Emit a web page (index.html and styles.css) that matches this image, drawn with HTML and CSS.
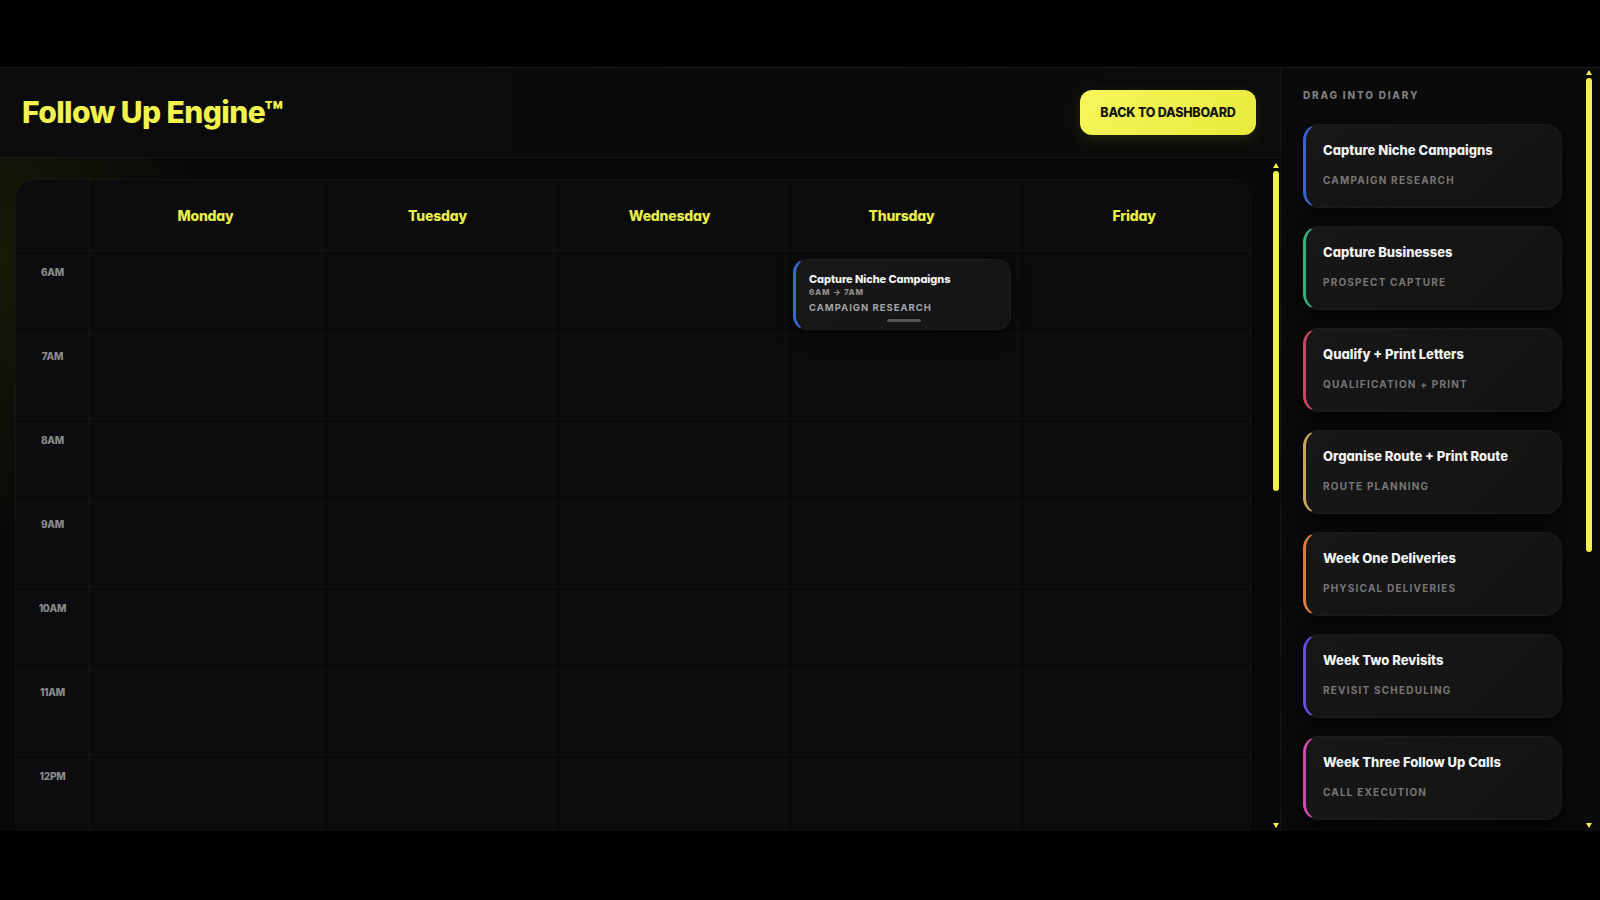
FILE: index.html
```html
<!DOCTYPE html>
<html lang="en">
<head>
    <meta charset="UTF-8">
    <meta name="viewport" content="width=device-width, initial-scale=1.0">
    <title>Follow Up Engine™ – Diary</title>
    <link rel="stylesheet" href="styles.css">
</head>
<body>
    <div class="topbar"></div>

    <div class="app">
        <main class="main">
            <header class="header">
                <h1>Follow Up Engine™</h1>
                <button type="button" class="back-btn">BACK TO DASHBOARD</button>
            </header>

            <div class="cal-area">
                <div class="cal-scroll">
                    <div class="calendar">
                        <div class="corner"></div>
                        <div class="day">Monday</div>
                        <div class="day">Tuesday</div>
                        <div class="day">Wednesday</div>
                        <div class="day">Thursday</div>
                        <div class="day">Friday</div>

                        <div class="time">6AM</div>
                        <div class="slot"></div>
                        <div class="slot"></div>
                        <div class="slot"></div>
                        <div class="slot">
                            <div class="event">
                                <div class="event-title">Capture Niche Campaigns</div>
                                <div class="event-time">6AM → 7AM</div>
                                <div class="event-cat">CAMPAIGN RESEARCH</div>
                                <div class="event-handle"></div>
                            </div>
                        </div>
                        <div class="slot"></div>

                        <div class="time">7AM</div>
                        <div class="slot"></div><div class="slot"></div><div class="slot"></div><div class="slot"></div><div class="slot"></div>

                        <div class="time">8AM</div>
                        <div class="slot"></div><div class="slot"></div><div class="slot"></div><div class="slot"></div><div class="slot"></div>

                        <div class="time">9AM</div>
                        <div class="slot"></div><div class="slot"></div><div class="slot"></div><div class="slot"></div><div class="slot"></div>

                        <div class="time">10AM</div>
                        <div class="slot"></div><div class="slot"></div><div class="slot"></div><div class="slot"></div><div class="slot"></div>

                        <div class="time">11AM</div>
                        <div class="slot"></div><div class="slot"></div><div class="slot"></div><div class="slot"></div><div class="slot"></div>

                        <div class="time">12PM</div>
                        <div class="slot"></div><div class="slot"></div><div class="slot"></div><div class="slot"></div><div class="slot"></div>
                    </div>
                </div>

                <div class="vscroll cal-bar">
                    <span class="arrow-up"></span>
                    <span class="thumb"></span>
                    <span class="arrow-down"></span>
                </div>
            </div>
        </main>

        <aside class="sidebar">
            <div class="side-list">
                <h2>DRAG INTO DIARY</h2>

                <div class="task task-blue">
                    <div class="task-title">Capture Niche Campaigns</div>
                    <div class="task-sub">CAMPAIGN RESEARCH</div>
                </div>
                <div class="task task-green">
                    <div class="task-title">Capture Businesses</div>
                    <div class="task-sub">PROSPECT CAPTURE</div>
                </div>
                <div class="task task-red">
                    <div class="task-title">Qualify + Print Letters</div>
                    <div class="task-sub">QUALIFICATION + PRINT</div>
                </div>
                <div class="task task-gold">
                    <div class="task-title">Organise Route + Print Route</div>
                    <div class="task-sub">ROUTE PLANNING</div>
                </div>
                <div class="task task-orange">
                    <div class="task-title">Week One Deliveries</div>
                    <div class="task-sub">PHYSICAL DELIVERIES</div>
                </div>
                <div class="task task-purple">
                    <div class="task-title">Week Two Revisits</div>
                    <div class="task-sub">REVISIT SCHEDULING</div>
                </div>
                <div class="task task-pink">
                    <div class="task-title">Week Three Follow Up Calls</div>
                    <div class="task-sub">CALL EXECUTION</div>
                </div>
            </div>

            <div class="vscroll side-bar">
                <span class="arrow-up"></span>
                <span class="thumb"></span>
                <span class="arrow-down"></span>
            </div>
        </aside>
    </div>
</body>
</html>
```

FILE: styles.css
```css
* {
    box-sizing: border-box;
}
body {
    margin: 0;
    height: 900px;
    overflow: hidden;
    background: #000;
    font-family: "Inter", "Noto Sans", sans-serif;
    font-feature-settings: "cv11";
    color: #f2f2f2;
}
.topbar {
    height: 67px;
    background: #000;
}
.app {
    display: flex;
    height: 764px;
    border-top: 1px solid #1b1b1b;
    background: #0a0a0a;
}

/* main column */
.main {
    width: 1281px;
    flex: none;
    display: flex;
    flex-direction: column;
    border-right: 1px solid #161616;
    background:
        radial-gradient(ellipse 200px 280px at 0 190px, rgba(150, 150, 0, 0.12), transparent),
        #080808;
}
.header {
    height: 90px;
    flex: none;
    display: flex;
    align-items: center;
    justify-content: space-between;
    padding: 0 24px 0 22px;
    border-bottom: 1px solid #181818;
    background: linear-gradient(90deg, #0c0c0c, #0a0a0a 60%, #0b0b0b);
}
.header h1 {
    margin: 0 0 2px;
    font-size: 30px;
    font-weight: 800;
    letter-spacing: -0.6px;
    color: #f1f34e;
}
.back-btn {
    width: 176px;
    height: 45px;
    border: 0;
    border-radius: 12px;
    background: linear-gradient(135deg, #f6f65c, #e9ea3c);
    color: #151515;
    font-family: inherit;
    font-size: 12.5px;
    font-weight: 800;
    letter-spacing: -0.2px;
    box-shadow: 0 4px 14px rgba(235, 235, 60, 0.12);
    cursor: pointer;
}

.cal-area {
    flex: 1;
    display: flex;
    min-height: 0;
}
.cal-scroll {
    flex: 1;
    overflow: hidden;
    padding: 21px 20px 0 15px;
}

/* drawn scrollbars */
.vscroll {
    flex: none;
    display: flex;
    flex-direction: column;
    align-items: center;
}
.cal-bar {
    width: 9px;
    padding: 5px 0 3px;
}
.side-bar {
    width: 10px;
    margin-right: 6px;
    padding: 2px 0 3px;
}
.thumb {
    width: 6px;
    margin-top: 3px;
    border-radius: 3px;
    background: #f1f24c;
}
.cal-bar .thumb {
    height: 320px;
}
.side-bar .thumb {
    height: 474px;
}
.arrow-up,
.arrow-down {
    width: 0;
    height: 0;
    border-left: 3px solid transparent;
    border-right: 3px solid transparent;
}
.arrow-up {
    border-bottom: 5px solid #f1f24c;
}
.arrow-down {
    margin-top: auto;
    border-top: 5px solid #f1f24c;
}

.calendar {
    display: grid;
    grid-template-columns: 74px repeat(5, 1fr);
    grid-template-rows: 71px;
    grid-auto-rows: 84px;
    border: 1px solid #151515;
    border-radius: 20px;
    overflow: hidden;
    background: #0b0b0b;
}
.corner,
.time {
    background: #0c0c0e;
    border-right: 1px solid #151515;
    border-bottom: 1px solid #141414;
}
.corner {
    border-radius: 18px 0 0 0;
}
.day {
    display: flex;
    align-items: center;
    justify-content: center;
    font-size: 14px;
    font-weight: 800;
    letter-spacing: -0.2px;
    color: #e9ee4a;
    border-right: 1px solid #151515;
    border-bottom: 1px solid #151515;
}
.time {
    padding-top: 16px;
    text-align: center;
    font-size: 10px;
    line-height: 11px;
    font-weight: 800;
    letter-spacing: -0.2px;
    color: #8a8a8a;
}
.slot {
    border-right: 1px solid #131313;
    border-bottom: 1px solid #121212;
}
.day:nth-child(6),
.slot:nth-child(6n) {
    border-right: 0;
}

.event {
    height: 71px;
    margin: 8px 6px 0 7px;
    padding: 12px 12px 0 13px;
    border: 1px solid #1d1d1d;
    border-left: 3px solid #3a68d6;
    border-radius: 14px;
    background: linear-gradient(135deg, #181818, #141414);
    box-shadow: 0 6px 16px rgba(0, 0, 0, 0.6);
}
.event-title {
    font-size: 11px;
    line-height: 14px;
    font-weight: 800;
    letter-spacing: -0.1px;
    color: #f2f2f2;
}
.event-time {
    margin-top: 1px;
    font-size: 8px;
    line-height: 11px;
    font-weight: 800;
    letter-spacing: 0.8px;
    color: #8d8d8d;
}
.event-cat {
    margin-top: 3px;
    font-size: 9.5px;
    line-height: 13px;
    font-weight: 700;
    letter-spacing: 1px;
    color: #a3a3a3;
}
.event-handle {
    width: 34px;
    height: 3px;
    margin: 5px auto 0;
    border-radius: 2px;
    background: #555;
}

/* sidebar */
.sidebar {
    flex: 1;
    display: flex;
    background: #0a0a0a;
}
.side-list {
    flex: 1;
    overflow: hidden;
    padding: 20px 22px 0 22px;
}
.sidebar h2 {
    margin: 0 0 22px;
    font-size: 10px;
    line-height: 14px;
    font-weight: 800;
    letter-spacing: 1.8px;
    color: #7f7f7f;
}
.task {
    height: 84px;
    margin-bottom: 18px;
    padding: 17px 20px 0 17px;
    border: 1px solid #1c1c1c;
    border-left: 3px solid #3a68d6;
    border-radius: 16px;
    background: linear-gradient(135deg, #171717, #131313);
    box-shadow: 0 8px 18px rgba(0, 0, 0, 0.7);
}
.task-title {
    font-size: 13px;
    line-height: 16px;
    font-weight: 800;
    letter-spacing: 0;
    color: #f3f3f3;
}
.task-sub {
    margin-top: 16px;
    font-size: 10px;
    line-height: 12px;
    font-weight: 700;
    letter-spacing: 1.2px;
    color: #777;
}
.task-blue { border-left-color: #3a62cf; }
.task-green { border-left-color: #37ad78; }
.task-red { border-left-color: #c9485f; }
.task-gold { border-left-color: #c7a55c; }
.task-orange { border-left-color: #d97a3e; }
.task-purple { border-left-color: #6352de; }
.task-pink { border-left-color: #c94eae; }
```
